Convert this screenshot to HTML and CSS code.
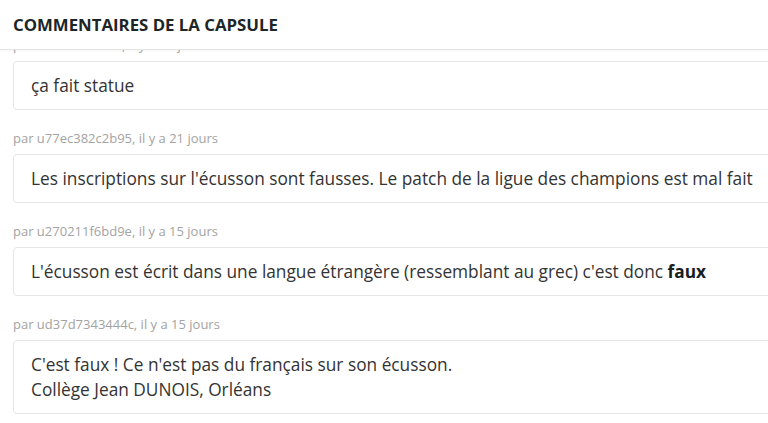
FILE: index.html
```html
<!DOCTYPE html>
<html lang="fr">
<head>
  <meta charset="UTF-8" />
  <meta name="viewport" content="width=device-width, initial-scale=1.0" />
  <title>Commentaires de la capsule</title>
  <link rel="stylesheet" href="styles.css">
</head>
<body>
  <div class="panel">
    <div class="panel-header">COMMENTAIRES DE LA CAPSULE</div>
    <div class="comments">
      <div class="comments-inner">
        <div class="comment">
          <div class="meta">par u4c91e02a7f3, il y a 22 jours</div>
          <div class="bubble">ça fait statue</div>
        </div>
        <div class="comment">
          <div class="meta">par u77ec382c2b95, il y a 21 jours</div>
          <div class="bubble">Les inscriptions sur l'écusson sont fausses. Le patch de la ligue des champions est mal fait</div>
        </div>
        <div class="comment">
          <div class="meta">par u270211f6bd9e, il y a 15 jours</div>
          <div class="bubble">L'écusson est écrit dans une langue étrangère (ressemblant au grec) c'est donc <strong>faux</strong></div>
        </div>
        <div class="comment">
          <div class="meta">par ud37d7343444c, il y a 15 jours</div>
          <div class="bubble">C'est faux ! Ce n'est pas du français sur son écusson.<br>Collège Jean DUNOIS, Orléans</div>
        </div>
      </div>
    </div>
  </div>
</body>
</html>
```

FILE: styles.css
```css
body {
  margin: 0;
  font-family: "Open Sans", "Noto Sans", Arial, sans-serif;
  background: white;
  color: #333;
  overflow: hidden;
}
.panel {
  height: 423px;
  display: flex;
  flex-direction: column;
}
.panel-header {
  height: 49px;
  flex-shrink: 0;
  display: flex;
  align-items: center;
  padding-left: 13px;
  font-size: 16.8px;
  font-weight: 700;
  color: #1c2626;
  border-bottom: 1px solid #e4e4e4;
  box-shadow: 0 1px 2px rgba(0, 0, 0, 0.04);
  position: relative;
  z-index: 1;
}
.comments {
  flex: 1;
  overflow: hidden;
}
.comments-inner {
  margin-top: -33px;
  padding-left: 13px;
}
.comment {
  padding-top: 20px;
}
.meta {
  font-size: 13px;
  line-height: 16px;
  color: #a3a3a3;
  margin-bottom: 8px;
}
.bubble {
  width: 800px;
  padding: 11px 17px;
  font-size: 17.3px;
  line-height: 25px;
  border: 1px solid #e6e6e6;
  border-radius: 4px;
  background: white;
}
.bubble strong {
  color: #17201f;
}
```
